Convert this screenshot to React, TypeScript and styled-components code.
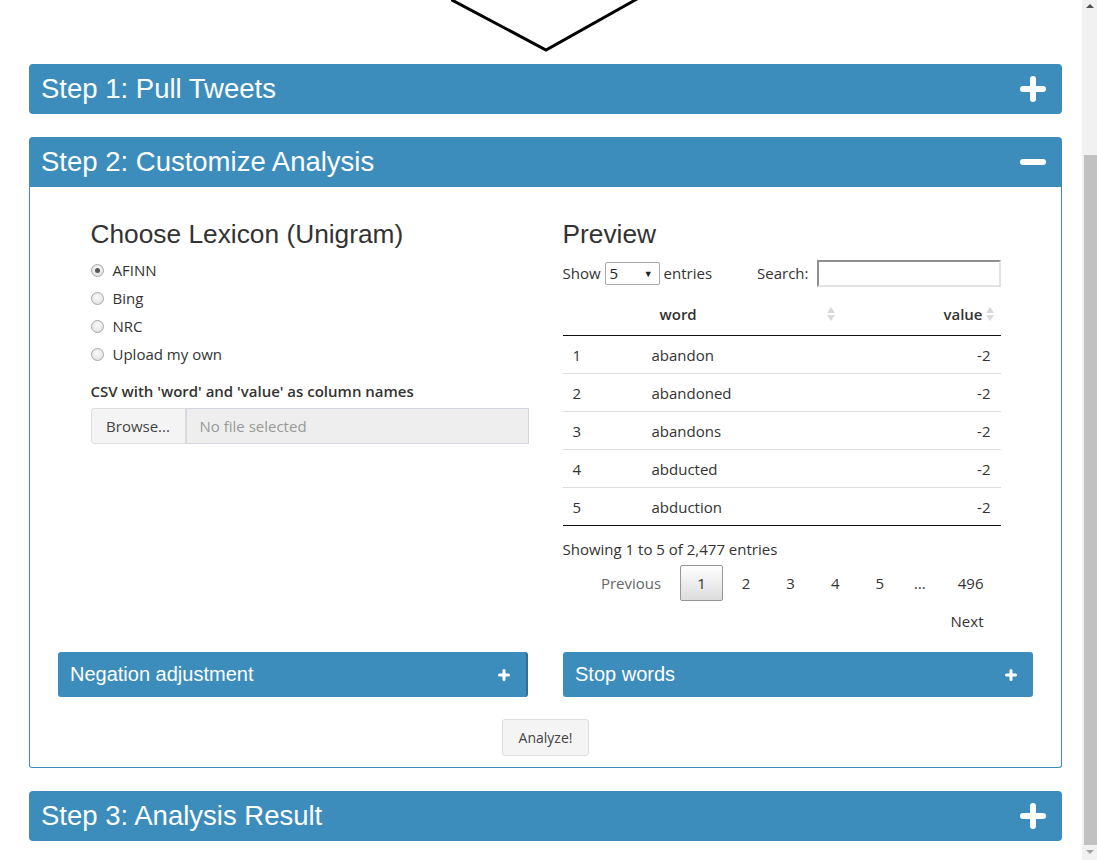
import React from "react";
import styled, { createGlobalStyle } from "styled-components";

const GlobalStyle = createGlobalStyle`
  html, body {
    margin: 0;
    padding: 0;
    background: #ffffff;
    font-family: "Open Sans", "Noto Sans", sans-serif;
    font-size: 14px;
    color: #333;
  }
`;

const blue = "#3c8dbc";

interface Row {
  id: number;
  word: string;
  value: number;
}

const rows: Row[] = [
  { id: 1, word: "abandon", value: -2 },
  { id: 2, word: "abandoned", value: -2 },
  { id: 3, word: "abandons", value: -2 },
  { id: 4, word: "abducted", value: -2 },
  { id: 5, word: "abduction", value: -2 },
];

const lexicons = ["AFINN", "Bing", "NRC", "Upload my own"];

const Page = styled.div`
  display: flex;
  height: 860px;
  overflow: hidden;
`;

const Main = styled.div`
  flex: 1;
  padding: 0 20px 0 29px;
`;

const Funnel = styled.svg`
  display: block;
  margin: 0 auto 12px;
`;

const Panel = styled.section`
  margin-bottom: 23px;
`;

const PanelHeader = styled.div<{ open?: boolean }>`
  height: 50px;
  background: ${blue};
  border-radius: ${(p) => (p.open ? "4px 4px 0 0" : "4px")};
  display: flex;
  align-items: center;
  justify-content: space-between;
  padding: 0 16px 0 12px;
  color: #fff;
  font-family: "Liberation Sans", Arial, sans-serif;
  font-size: 27.5px;
`;

const PanelBody = styled.div`
  border: 1px solid ${blue};
  border-top: none;
  border-radius: 0 0 3px 3px;
  padding: 33px 0 11px;
  display: flex;
  flex-direction: column;
  align-items: center;
`;

const Columns = styled.div`
  width: 910px;
  display: grid;
  grid-template-columns: 438px 438px;
  column-gap: 34px;
  align-items: start;
`;

const Column = styled.div`
  display: flex;
  flex-direction: column;
`;

const Title = styled.h3`
  margin: 0;
  font-family: "Liberation Sans", Arial, sans-serif;
  font-weight: 400;
  font-size: 26.3px;
  line-height: 28px;
  color: #333;
`;

const RadioList = styled.div`
  margin-top: 8px;
  display: flex;
  flex-direction: column;
`;

const RadioRow = styled.label`
  height: 28px;
  display: flex;
  align-items: center;
  gap: 9px;
  font-size: 15px;
  color: #333;
`;

const RadioDot = styled.span<{ checked?: boolean }>`
  width: 11px;
  height: 11px;
  border-radius: 50%;
  border: 1px solid #a7a7a7;
  background: radial-gradient(circle at 50% 40%, #fafafa, #dcdcdc);
  display: flex;
  align-items: center;
  justify-content: center;
  &::after {
    content: "";
    display: ${(p) => (p.checked ? "block" : "none")};
    width: 5px;
    height: 5px;
    border-radius: 50%;
    background: #555;
  }
`;

const FieldLabel = styled.div`
  margin-top: 13px;
  font-size: 15px;
  font-weight: 600;
  line-height: 20px;
  color: #333;
`;

const FileInput = styled.div`
  margin-top: 7px;
  height: 36px;
  display: flex;
`;

const BrowseButton = styled.div`
  width: 93px;
  display: flex;
  align-items: center;
  justify-content: center;
  background: #f4f4f4;
  border: 1px solid #ddd;
  border-radius: 3px 0 0 3px;
  font-size: 15px;
  color: #444;
`;

const FileName = styled.div`
  flex: 1;
  display: flex;
  align-items: center;
  padding-left: 13px;
  background: #eeeeee;
  border: 1px solid #d2d6de;
  font-size: 15px;
  color: #999;
`;

const Controls = styled.div`
  margin-top: 10px;
  height: 30px;
  display: flex;
  align-items: center;
  justify-content: space-between;
  font-size: 15px;
`;

const ControlGroup = styled.div`
  display: flex;
  align-items: center;
  gap: 4px;
`;

const SelectBox = styled.div`
  width: 43px;
  height: 21px;
  border: 1px solid #aaa;
  border-radius: 2px;
  display: flex;
  align-items: center;
  justify-content: space-between;
  padding: 0 6px 0 4px;
  font-size: 15px;
  color: #222;
  span {
    font-size: 9px;
  }
`;

const SearchInput = styled.div`
  width: 180px;
  height: 23px;
  margin-left: 4px;
  border: 2px solid;
  border-color: #8f8f8f #e3e3e3 #e3e3e3 #8f8f8f;
`;

const Table = styled.table`
  margin-top: 4px;
  width: 438px;
  border-collapse: collapse;
  font-size: 15px;
  th {
    height: 43px;
    padding: 0 18px;
    font-weight: 600;
    border-bottom: 1px solid #111;
    position: relative;
  }
  td {
    height: 37px;
    padding: 0 10px;
    border-bottom: 1px solid #ddd;
  }
  tbody tr:last-child td {
    border-bottom: 1px solid #111;
  }
`;

const HeadCell = styled.th<{ align?: "left" | "right" }>`
  text-align: ${(p) => p.align ?? "left"};
`;

const Cell = styled.td<{ align?: "left" | "right" }>`
  text-align: ${(p) => p.align ?? "left"};
`;

const SortIcon = styled.svg`
  position: absolute;
  right: 6px;
  top: 50%;
  margin-top: -8px;
`;

const Info = styled.div`
  margin-top: 13px;
  line-height: 20px;
  font-size: 15px;
`;

const Pagination = styled.div`
  margin-top: 6px;
  display: flex;
  flex-wrap: wrap;
  justify-content: flex-end;
  row-gap: 2px;
`;

const PageButton = styled.div<{ current?: boolean; muted?: boolean }>`
  height: 34px;
  margin-left: 2px;
  padding: 0 16px;
  display: flex;
  align-items: center;
  justify-content: center;
  border: 1px solid ${(p) => (p.current ? "#979797" : "transparent")};
  border-radius: 2px;
  background: ${(p) => (p.current ? "linear-gradient(#ffffff, #dcdcdc)" : "transparent")};
  font-size: 15px;
  color: ${(p) => (p.muted ? "#666" : "#333")};
`;

const Ellipsis = styled.span`
  height: 36px;
  padding: 0 13px;
  display: flex;
  align-items: center;
  font-size: 15px;
  color: #333;
`;

const BoxRow = styled.div`
  margin-top: 13px;
  width: 975px;
  display: grid;
  grid-template-columns: 470px 470px;
  column-gap: 35px;
`;

const BoxHeader = styled.div<{ edge?: boolean }>`
  height: 45px;
  background: ${blue};
  border-radius: 3px;
  border-right: ${(p) => (p.edge ? "2px solid #2f6f95" : "none")};
  box-sizing: border-box;
  display: flex;
  align-items: center;
  justify-content: space-between;
  padding: 0 16px 0 12px;
  color: #fff;
  font-family: "Liberation Sans", Arial, sans-serif;
  font-size: 20px;
`;

const AnalyzeButton = styled.button`
  margin-top: 22px;
  height: 37px;
  padding: 0 16px;
  background: #f4f4f4;
  border: 1px solid #ddd;
  border-radius: 3px;
  font-family: "Open Sans", sans-serif;
  font-size: 14px;
  color: #444;
`;

const Scrollbar = styled.div`
  width: 15px;
  flex-shrink: 0;
  background: #f1f1f1;
  display: flex;
  flex-direction: column;
  align-items: flex-end;
  padding-top: 4px;
`;

const ScrollArrow = styled.div<{ down?: boolean }>`
  align-self: center;
  width: 0;
  height: 0;
  border-left: 4px solid transparent;
  border-right: 4px solid transparent;
  ${(p) =>
    p.down
      ? "border-top: 4px solid #a3a3a3; margin-top: 5px;"
      : "border-bottom: 4px solid #505050; margin-bottom: 147px;"}
`;

const ScrollThumb = styled.div`
  width: 13px;
  height: 690px;
  flex-shrink: 0;
  background: #c1c1c1;
`;

const Plus: React.FC<{ size: number; stroke: number }> = ({ size, stroke }) => (
  <svg width={size} height={size} viewBox={`0 0 ${size} ${size}`}>
    <path
      d={`M${size / 2} ${stroke / 2}V${size - stroke / 2}M${stroke / 2} ${size / 2}H${size - stroke / 2}`}
      stroke="#fff"
      strokeWidth={stroke}
      strokeLinecap="round"
    />
  </svg>
);

const Minus: React.FC = () => (
  <svg width={26} height={26} viewBox="0 0 26 26">
    <path d="M3 13H23" stroke="#fff" strokeWidth={6} strokeLinecap="round" />
  </svg>
);

const Sort: React.FC = () => (
  <SortIcon width={10} height={16} viewBox="0 0 10 16">
    <path d="M5 1L9 7H1Z" fill="#dadada" />
    <path d="M5 15L9 9H1Z" fill="#dadada" />
  </SortIcon>
);

export default function App() {
  return (
    <Page>
      <GlobalStyle />
      <Main>
        <Funnel width={190} height={52} viewBox="0 0 190 52">
          <polyline points="-1,-1 95,50 186,-1" fill="none" stroke="#000" strokeWidth={3} />
        </Funnel>

        <Panel>
          <PanelHeader>
            <span>Step 1: Pull Tweets</span>
            <Plus size={26} stroke={6} />
          </PanelHeader>
        </Panel>

        <Panel>
          <PanelHeader open>
            <span>Step 2: Customize Analysis</span>
            <Minus />
          </PanelHeader>
          <PanelBody>
            <Columns>
              <Column>
                <Title>Choose Lexicon (Unigram)</Title>
                <RadioList>
                  {lexicons.map((name, i) => (
                    <RadioRow key={name}>
                      <RadioDot checked={i === 0} />
                      {name}
                    </RadioRow>
                  ))}
                </RadioList>
                <FieldLabel>CSV with 'word' and 'value' as column names</FieldLabel>
                <FileInput>
                  <BrowseButton>Browse...</BrowseButton>
                  <FileName>No file selected</FileName>
                </FileInput>
              </Column>

              <Column>
                <Title>Preview</Title>
                <Controls>
                  <ControlGroup>
                    Show
                    <SelectBox>
                      5<span>▼</span>
                    </SelectBox>
                    entries
                  </ControlGroup>
                  <ControlGroup>
                    Search:
                    <SearchInput />
                  </ControlGroup>
                </Controls>
                <Table>
                  <colgroup>
                    <col style={{ width: 79 }} />
                    <col style={{ width: 200 }} />
                    <col style={{ width: 159 }} />
                  </colgroup>
                  <thead>
                    <tr>
                      <HeadCell />
                      <HeadCell>
                        word
                        <Sort />
                      </HeadCell>
                      <HeadCell align="right">
                        value
                        <Sort />
                      </HeadCell>
                    </tr>
                  </thead>
                  <tbody>
                    {rows.map((r) => (
                      <tr key={r.id}>
                        <Cell>{r.id}</Cell>
                        <Cell>{r.word}</Cell>
                        <Cell align="right">{r.value}</Cell>
                      </tr>
                    ))}
                  </tbody>
                </Table>
                <Info>Showing 1 to 5 of 2,477 entries</Info>
                <Pagination>
                  <PageButton muted>Previous</PageButton>
                  <PageButton current>1</PageButton>
                  <PageButton>2</PageButton>
                  <PageButton>3</PageButton>
                  <PageButton>4</PageButton>
                  <PageButton>5</PageButton>
                  <Ellipsis>…</Ellipsis>
                  <PageButton>496</PageButton>
                  <PageButton>Next</PageButton>
                </Pagination>
              </Column>
            </Columns>

            <BoxRow>
              <BoxHeader edge>
                <span>Negation adjustment</span>
                <Plus size={12} stroke={3} />
              </BoxHeader>
              <BoxHeader>
                <span>Stop words</span>
                <Plus size={12} stroke={3} />
              </BoxHeader>
            </BoxRow>

            <AnalyzeButton>Analyze!</AnalyzeButton>
          </PanelBody>
        </Panel>

        <Panel>
          <PanelHeader>
            <span>Step 3: Analysis Result</span>
            <Plus size={26} stroke={6} />
          </PanelHeader>
        </Panel>
      </Main>
      <Scrollbar>
        <ScrollArrow />
        <ScrollThumb />
        <ScrollArrow down />
      </Scrollbar>
    </Page>
  );
}
